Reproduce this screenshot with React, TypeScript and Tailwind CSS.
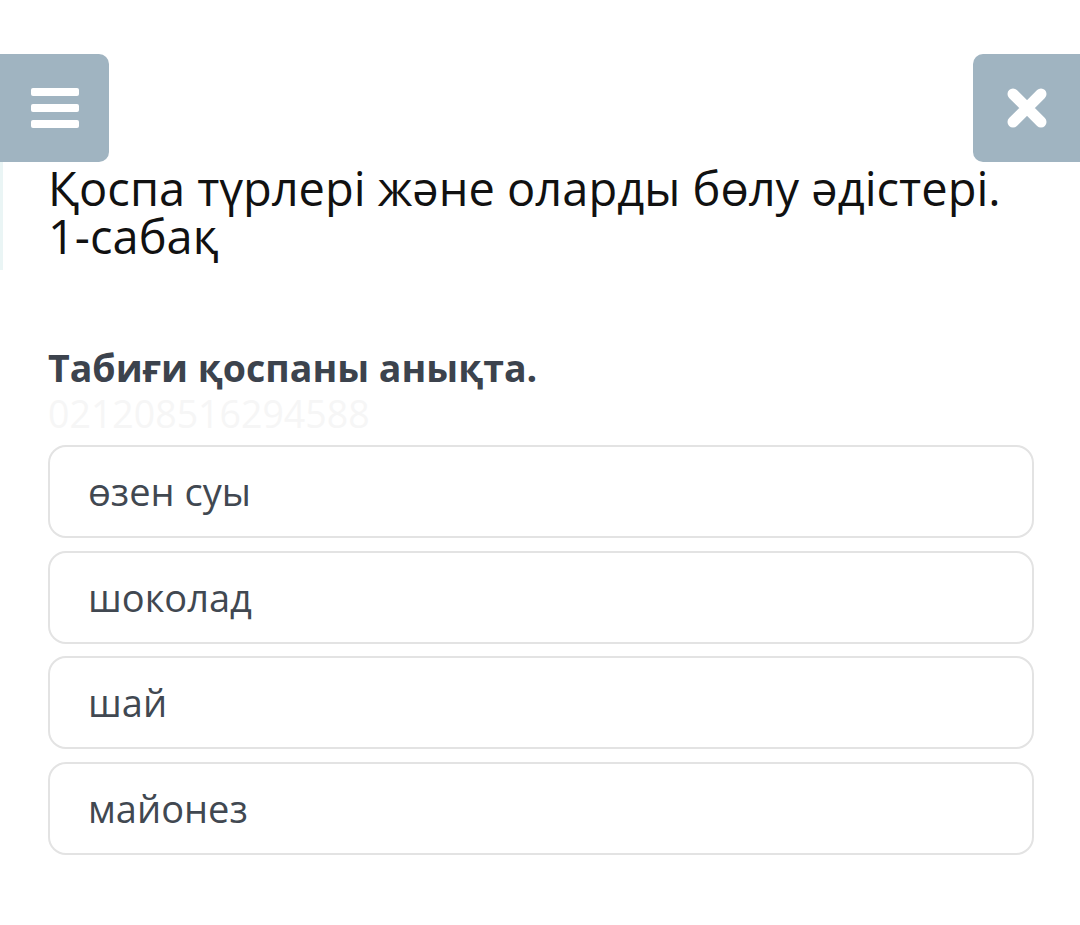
import React from 'react';

const options = ['өзен суы', 'шоколад', 'шай', 'майонез'];

const MenuIcon = () => (
  <svg width="48" height="40" viewBox="0 0 48 40">
    <rect x="0" y="0" width="48" height="8" rx="2" fill="#fff" />
    <rect x="0" y="16" width="48" height="8" rx="2" fill="#fff" />
    <rect x="0" y="32" width="48" height="8" rx="2" fill="#fff" />
  </svg>
);

const CloseIcon = () => (
  <svg width="40" height="40" viewBox="0 0 40 40">
    <path d="M6 6 L34 34 M34 6 L6 34" stroke="#fff" strokeWidth="11" strokeLinecap="round" />
  </svg>
);

export default function App() {
  return (
    <div className="w-[1080px] h-[925px] bg-white overflow-hidden font-['Open_Sans',sans-serif] pt-[54px]">
      <div className="flex justify-between h-[108px]">
        <button className="w-[109px] h-[108px] bg-[#a0b4c1] rounded-r-[10px] flex items-center justify-center">
          <MenuIcon />
        </button>
        <button className="w-[107px] h-[108px] bg-[#a0b4c1] rounded-l-[10px] flex items-center justify-center">
          <CloseIcon />
        </button>
      </div>

      <div className="border-l-[3px] border-[#eaf5f5] h-[108px] pl-[45px] pt-[2px]">
        <h1 className="text-[47px] leading-[48px] text-[#111] font-normal">
          Қоспа түрлері және оларды бөлу әдістері.{' '}
          <span className="whitespace-nowrap">1-сабақ</span>
        </h1>
      </div>

      <div className="pl-[48px] pr-[46px] mt-[76px]">
        <p className="text-[37.5px] leading-[44px] font-bold text-[#3c434d]">Табиғи қоспаны анықта.</p>
        <p className="text-[37.5px] leading-[44px] text-[#f6f6f6] mt-[2px]">021208516294588</p>

        <div className="flex flex-col gap-[12.5px] mt-[9px]">
          {options.map((o) => (
            <div
              key={o}
              className="h-[93px] border-2 border-[#e3e3e3] rounded-[18px] flex items-center pl-[38px] text-[38px] text-[#414851]"
            >
              {o}
            </div>
          ))}
        </div>
      </div>
    </div>
  );
}
